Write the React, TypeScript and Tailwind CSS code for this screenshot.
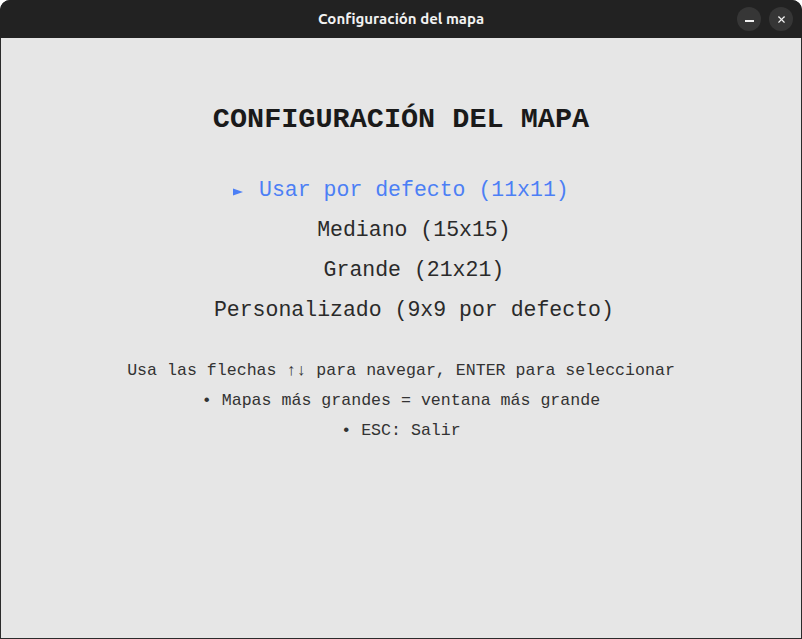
import { X } from "lucide-react";

const options = [
  "Usar por defecto (11x11)",
  "Mediano (15x15)",
  "Grande (21x21)",
  "Personalizado (9x9 por defecto)",
];

export default function App() {
  const selected = 0;

  return (
    <div className="w-[802px] h-[639px] flex flex-col bg-[#2b2b2b] rounded-t-[10px] overflow-hidden">
      {/* Title bar */}
      <div className="relative h-[38px] shrink-0 flex items-center justify-center bg-[#222222]">
        <span className="text-[15px] font-bold text-[#f2f2f2] font-['Ubuntu','Noto_Sans',sans-serif]">
          Configuración del mapa
        </span>
        <div className="absolute right-[9px] top-[7px] flex gap-[8px]">
          <button className="w-[24px] h-[24px] rounded-full bg-[#363636] flex items-center justify-center">
            <span className="block w-[9px] h-[1.5px] bg-[#f0f0f0] mt-[4px]" />
          </button>
          <button className="w-[24px] h-[24px] rounded-full bg-[#363636] flex items-center justify-center">
            <X className="w-[11px] h-[11px] text-[#f0f0f0]" strokeWidth={2.5} />
          </button>
        </div>
      </div>

      {/* Content */}
      <div className="flex-1 mx-[1px] mb-[1px] bg-[#e6e6e6] flex flex-col items-center pt-[64px] font-['Liberation_Mono','Courier_New',monospace] text-[#222222]">
        <h1 className="text-[28.5px] leading-[36px] font-bold text-[#1a1a1a]">CONFIGURACIÓN DEL MAPA</h1>

        <ul className="mt-[32px] flex flex-col items-center">
          {options.map((o, i) => (
            <li
              key={o}
              className={
                i === selected
                  ? "text-[21.5px] leading-[40px] text-[#4c7ff5] whitespace-pre flex items-center"
                  : "text-[21.5px] leading-[40px] text-[#2a2a2a] whitespace-pre"
              }
            >
              {i === selected ? (
                <>
                  <span className="w-[25.8px] flex items-center">
                    <svg width="10" height="8" viewBox="0 0 10 8" className="mt-[3px]">
                      <path d="M0 0.5 L10 4 L0 7.5 Z" fill="#4c7ff5" />
                    </svg>
                  </span>
                  {o}
                </>
              ) : (
                "  " + o
              )}
            </li>
          ))}
        </ul>

        <div className="mt-[26px] flex flex-col items-center text-[16.6px] leading-[30px] text-[#333333]">
          <p>Usa las flechas ↑↓ para navegar, ENTER para seleccionar</p>
          <p>• Mapas más grandes = ventana más grande</p>
          <p>• ESC: Salir</p>
        </div>
      </div>
    </div>
  );
}
